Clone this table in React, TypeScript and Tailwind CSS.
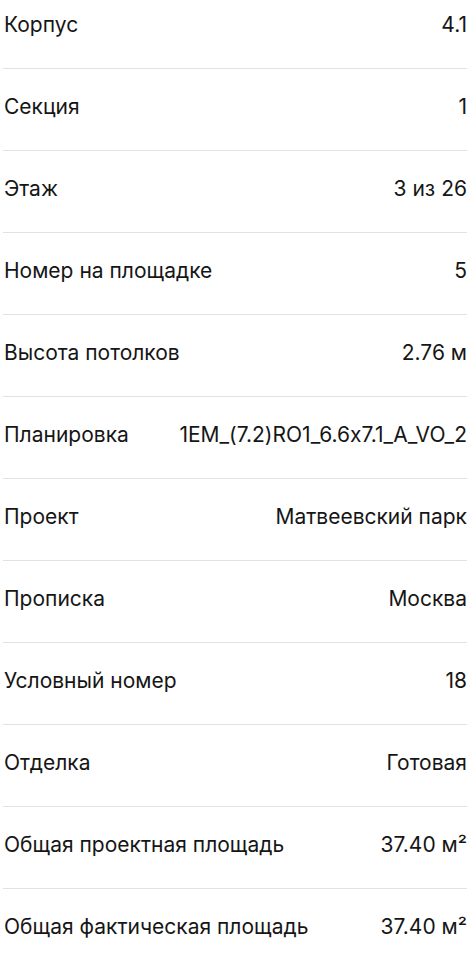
const rows: [string, string][] = [
  ['Корпус', '4.1'],
  ['Секция', '1'],
  ['Этаж', '3 из 26'],
  ['Номер на площадке', '5'],
  ['Высота потолков', '2.76 м'],
  ['Планировка', '1EM_(7.2)RO1_6.6x7.1_A_VO_2'],
  ['Проект', 'Матвеевский парк'],
  ['Прописка', 'Москва'],
  ['Условный номер', '18'],
  ['Отделка', 'Готовая'],
  ['Общая проектная площадь', '37.40 м²'],
  ['Общая фактическая площадь', '37.40 м²'],
];

export default function App() {
  return (
    <div className="h-[960px] w-[476px] overflow-hidden bg-white font-['Inter',sans-serif] text-[21px] text-[#161616] [font-feature-settings:'calt'_0]">
      {/* list is scrolled, first row partly cut off */}
      <div className="mt-[-13px] pl-[3px] pr-[9px]">
        {rows.map(([label, value]) => (
          <div
            key={label}
            className="flex h-[82px] items-center justify-between border-b border-[#e2e2e2] pb-[5px] pl-[1px]"
          >
            <span>{label}</span>
            <span className="text-right">{value}</span>
          </div>
        ))}
      </div>
    </div>
  );
}
